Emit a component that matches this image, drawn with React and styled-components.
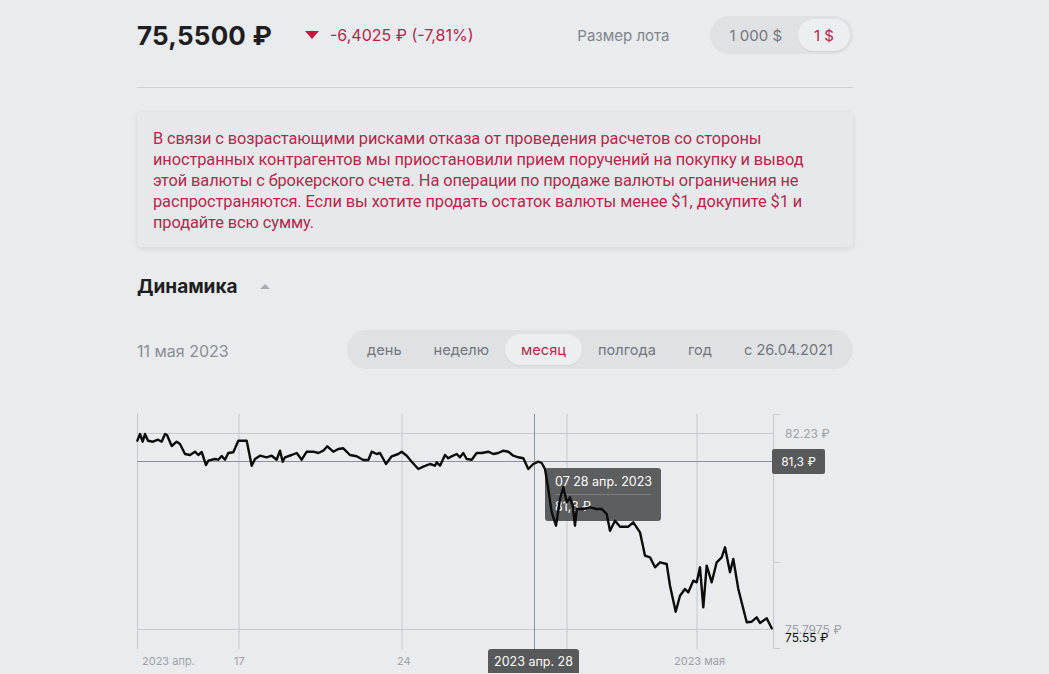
import React from "react";
import styled, { createGlobalStyle } from "styled-components";

const Global = createGlobalStyle`
  html, body { margin: 0; padding: 0; background: #e9ebee; }
  body { font-family: Inter, "Noto Sans", sans-serif; color: #1f2023; overflow: hidden; }
`;

const Page = styled.div`
  width: 716px;
  margin-left: 137px;
  padding-top: 15px;
`;

const Header = styled.div`
  display: flex;
  align-items: center;
  height: 38px;
  margin-top: 1px;
`;

const Price = styled.div`
  font-size: 26px;
  font-weight: 700;
  letter-spacing: 0.2px;
  color: #1d1e21;
`;

const Change = styled.div`
  display: flex;
  align-items: center;
  margin-left: 33px;
  color: #b0284a;
  font-size: 16px;
  gap: 11px;
`;

const DownArrow = styled.span`
  width: 0;
  height: 0;
  border-left: 7px solid transparent;
  border-right: 7px solid transparent;
  border-top: 8px solid #c4153d;
`;

const LotLabel = styled.div`
  margin-left: auto;
  margin-right: 41px;
  font-size: 15px;
  color: #80848b;
`;

const Segmented = styled.div`
  display: flex;
  align-items: center;
  background: #dfe1e4;
  border-radius: 20px;
  padding: ${(p) => p.$pad}px;
  height: ${(p) => p.$h}px;
  box-sizing: border-box;
`;

const Segment = styled.div`
  padding: 0 ${(p) => p.$px}px;
  height: 100%;
  display: flex;
  align-items: center;
  border-radius: 18px;
  font-size: ${(p) => p.$fs || 15}px;
  white-space: nowrap;
  color: ${(p) => (p.$active ? "#b3284c" : "#72777e")};
  background: ${(p) => (p.$active ? "#eceef1" : "transparent")};
  box-shadow: ${(p) => (p.$active ? "0 1px 2px rgba(0,0,0,0.06)" : "none")};
`;

const Divider = styled.div`
  margin-top: 33px;
  height: 1px;
  background: #cdd0d5;
`;

const Alert = styled.div`
  margin-top: 24px;
  background: #e6e8eb;
  border-radius: 4px;
  box-shadow: 0 1px 5px rgba(0, 0, 0, 0.1);
  padding: 16px 16px 14px;
  color: #b4284b;
  font-family: Roboto, "Noto Sans", sans-serif;
  font-size: 16.4px;
  line-height: 21px;
  letter-spacing: -0.1px;
`;

const AlertLine = styled.span`
  display: block;
  white-space: nowrap;
`;

const TitleRow = styled.div`
  margin-top: 27px;
  display: flex;
  align-items: center;
  height: 24px;
`;

const Title = styled.h2`
  margin: 0;
  font-size: 19px;
  font-weight: 700;
  color: #1d1e21;
`;

const UpArrow = styled.span`
  margin-left: 22px;
  width: 0;
  height: 0;
  border-left: 5px solid transparent;
  border-right: 5px solid transparent;
  border-bottom: 5px solid #a7abb2;
`;

const Controls = styled.div`
  margin-top: 32px;
  display: flex;
  align-items: center;
  justify-content: space-between;
`;

const DateLabel = styled.div`
  font-size: 16px;
  color: #8a8e95;
  padding-top: 2px;
`;

const ChartArea = styled.div`
  position: relative;
  margin-top: 30px;
  height: 274px;
`;

const ChartSvg = styled.svg`
  display: block;
  overflow: visible;
`;

const LineLayer = styled.svg`
  position: absolute;
  left: 0;
  top: 0;
  overflow: visible;
  pointer-events: none;
`;

const Badge = styled.div`
  position: absolute;
  background: #58595b;
  color: #fff;
  font-size: ${(p) => p.$fs || 12}px;
  border-radius: ${(p) => p.$radius || "2px"};
  display: flex;
  align-items: center;
  justify-content: center;
  white-space: nowrap;
`;

const Tooltip = styled.div`
  position: absolute;
  left: 408px;
  top: 69px;
  width: 116px;
  height: 53px;
  box-sizing: border-box;
  background: rgba(82, 83, 85, 0.93);
  border-radius: 3px;
  color: #fff;
  font-size: 12.5px;
  padding: 6px 10px 0;
  white-space: nowrap;
`;

const TipRow = styled.div`
  line-height: 16px;
  padding-bottom: ${(p) => (p.$first ? "4px" : "0")};
  border-bottom: ${(p) => (p.$first ? "1px solid #7d7e80" : "none")};
  margin-bottom: ${(p) => (p.$first ? "4px" : "0")};
`;

const PTS = [
  [137.3, 441.7], [140, 435], [142.7, 442.7], [145, 435], [148, 441.7], [153, 442.7], [158, 440.7],
  [161.7, 442.7], [165, 435], [167, 436], [171.7, 447], [176.7, 442.7], [180, 445], [185, 455],
  [190, 456], [195, 452.7], [198.3, 456], [201.7, 453], [206, 466], [208.3, 461.7], [215, 460],
  [218.3, 460.7], [221.7, 457], [225, 460.7], [228.3, 454], [233.3, 453.3], [238.3, 441.7],
  [246.7, 441.7], [251.7, 466.7], [255, 460], [260, 456.7], [266.7, 458.3], [271.7, 456.7],
  [276.7, 460.7], [280, 451.7], [282.7, 462.7], [285, 458.3], [291.7, 456], [296.7, 454],
  [301.7, 460.7], [306.7, 452.7], [313.3, 452.7], [318.3, 454], [323.3, 451.7], [327.3, 447.3],
  [333.3, 452.7], [338.3, 450], [343.3, 449.3], [350, 456], [356.7, 457.3], [363.3, 461],
  [368.3, 461], [371.7, 452.7], [376.7, 455], [380, 454], [386, 465], [391.7, 457.3], [398.3, 455],
  [401.7, 452.7], [406.7, 456.7], [411.7, 462.7], [418.3, 470], [423.3, 467.7], [430, 465],
  [435, 466.7], [436.7, 463.3], [440, 466.7], [445, 456], [448.3, 459.3], [451.7, 457.3],
  [456.7, 455], [460, 458.3], [463.3, 454], [466.7, 460], [471.7, 460.7], [476.7, 454],
  [481.7, 454], [488.3, 452.7], [493.3, 455], [498.3, 454], [503.3, 451.7], [508.3, 452.7],
  [513.3, 456.7], [518.3, 458.3], [523.3, 459.3], [528.3, 470], [533.3, 465], [538.3, 462.7],
  [541.7, 464], [545, 470], [548.3, 490], [551.7, 513.3], [556, 526.7], [560, 500], [563.3, 488.3],
  [566.7, 503.3], [570, 498.3], [572.7, 506.7], [575, 526.7], [576.7, 510], [583.3, 510],
  [590, 508.3], [596.7, 510], [601.7, 510], [606.7, 515], [610, 531.7], [615, 521.7],
  [620, 527.7], [628.3, 527.7], [633.3, 523.3], [640, 533.3], [645, 556.7], [650, 558.3],
  [655, 568.3], [660, 563.3], [666.7, 565], [670, 586.7], [675.7, 612.7], [680, 596.7],
  [685, 590], [688.3, 593.3], [693.3, 581.7], [696.7, 583.3], [700, 568.3], [703.3, 608.3],
  [706.7, 566.7], [711.7, 583.3], [716.7, 563.3], [721.7, 558.3], [725, 548.3], [730, 573.3],
  [733.3, 560], [738.3, 590], [746.7, 623.3], [751.7, 622.7], [756.7, 618.3], [760, 624],
  [766.7, 619.3], [771.7, 629.3],
];

const OX = 137;
const OY = 400;
const linePath = PTS.map(([x, y], i) => `${i ? "L" : "M"}${(x - OX).toFixed(1)} ${(y - OY).toFixed(1)}`).join(" ");

const GRID = "#c6c9ce";
const AXIS_TXT = "#9da1a8";

function Chart() {
  const vx = [0.5, 102, 265, 430, 560];
  return (
    <ChartArea>
      <ChartSvg width="716" height="274" viewBox="0 0 716 274">
        {vx.map((x) => (
          <line key={x} x1={x} y1="15" x2={x} y2="250" stroke={GRID} strokeWidth="1" />
        ))}
        <line x1="0" y1="34.5" x2="636" y2="34.5" stroke={GRID} />
        <line x1="0" y1="230.5" x2="636" y2="230.5" stroke={GRID} />
        <line x1="0" y1="62.5" x2="636" y2="62.5" stroke="#8a919c" />
        <line x1="397.5" y1="15" x2="397.5" y2="274" stroke="#8a919c" />
        <path d="M643 15.5 H636.5 V249.5 H643 M636.5 163.5 H643" fill="none" stroke={GRID} />
        <text x="648" y="39" fontSize="12" fill={AXIS_TXT} fontFamily="Inter, sans-serif">82.23 ₽</text>
        <text x="648" y="235" fontSize="12" fill={AXIS_TXT} fontFamily="Inter, sans-serif">75.7975 ₽</text>
        <text x="648" y="243" fontSize="12" fill="#111" fontFamily="Inter, sans-serif">75.55 ₽</text>
        <text x="5" y="266" fontSize="11" fill={AXIS_TXT} fontFamily="Inter, sans-serif">2023 апр.</text>
        <text x="97" y="266" fontSize="11" fill={AXIS_TXT} fontFamily="Inter, sans-serif">17</text>
        <text x="260" y="266" fontSize="11" fill={AXIS_TXT} fontFamily="Inter, sans-serif">24</text>
        <text x="537" y="266" fontSize="11" fill={AXIS_TXT} fontFamily="Inter, sans-serif">2023 мая</text>
      </ChartSvg>
      <Badge style={{ left: 635, top: 50, width: 53, height: 25 }}>81,3 ₽</Badge>
      <Badge $fs={12.5} $radius="3px 3px 0 0" style={{ left: 351, top: 250, width: 91, height: 24 }}>
        2023 апр. 28
      </Badge>
      <Tooltip>
        <TipRow $first>07 28 апр. 2023</TipRow>
        <TipRow>81,3 ₽</TipRow>
      </Tooltip>
      <LineLayer width="716" height="274" viewBox="0 0 716 274">
        <path d={linePath} fill="none" stroke="#0c0c0d" strokeWidth="2.4" strokeLinejoin="round" strokeLinecap="round" />
      </LineLayer>
    </ChartArea>
  );
}

const periods = ["день", "неделю", "месяц", "полгода", "год", "с 26.04.2021"];

export default function App() {
  return (
    <>
      <Global />
      <Page>
        <Header>
          <Price>75,5500 ₽</Price>
          <Change>
            <DownArrow />
            <span>-6,4025 ₽ (-7,81%)</span>
          </Change>
          <LotLabel>Размер лота</LotLabel>
          <Segmented $pad={3} $h={38}>
            <Segment $px={16}>1 000 $</Segment>
            <Segment $px={16} $active>1 $</Segment>
          </Segmented>
        </Header>
        <Divider />
        <Alert>
          <AlertLine>В связи с возрастающими рисками отказа от проведения расчетов со стороны</AlertLine>
          <AlertLine>иностранных контрагентов мы приостановили прием поручений на покупку и вывод</AlertLine>
          <AlertLine>этой валюты с брокерского счета. На операции по продаже валюты ограничения не</AlertLine>
          <AlertLine>распространяются. Если вы хотите продать остаток валюты менее $1, докупите $1 и</AlertLine>
          <AlertLine>продайте всю сумму.</AlertLine>
        </Alert>
        <TitleRow>
          <Title>Динамика</Title>
          <UpArrow />
        </TitleRow>
        <Controls>
          <DateLabel>11 мая 2023</DateLabel>
          <Segmented $pad={4} $h={39}>
            {periods.map((p) => (
              <Segment key={p} $px={16} $fs={14.6} $active={p === "месяц"}>
                {p}
              </Segment>
            ))}
          </Segmented>
        </Controls>
        <Chart />
      </Page>
    </>
  );
}
